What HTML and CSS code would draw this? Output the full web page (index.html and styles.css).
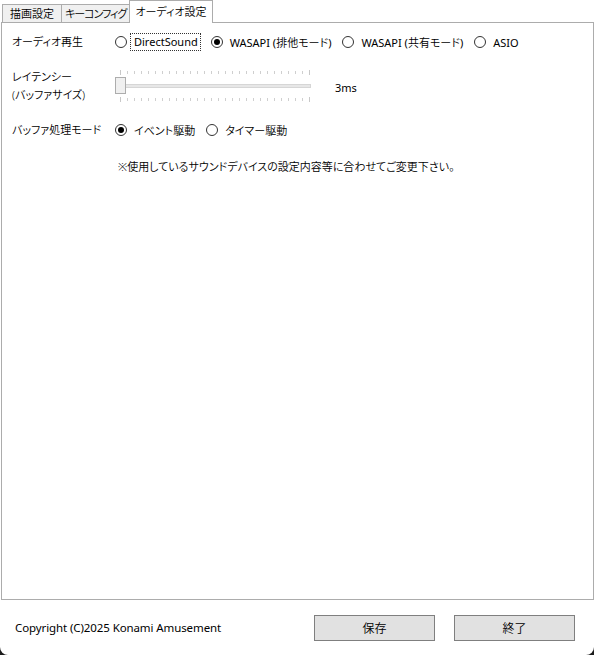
FILE: index.html
```html
<!DOCTYPE html>
<html lang="ja">
<head>
<meta charset="utf-8">
<title>オーディオ設定</title>
<link rel="stylesheet" href="styles.css">
</head>
<body>
<div class="window">
  <div class="tabs">
    <div class="tab first">描画設定</div>
    <div class="tab narrow">キーコンフィグ</div>
    <div class="tab active">オーディオ設定</div>
  </div>
  <div class="panel">
    <div class="row row-playback">
      <div class="label">オーディオ再生</div>
      <div class="options">
        <label class="radio"><span class="circle"></span><span class="text focus lt">DirectSound</span></label>
        <label class="radio"><span class="circle on"></span><span class="text"><span class="lt">WASAPI (</span>排他モード<span class="lt">)</span></span></label>
        <label class="radio"><span class="circle"></span><span class="text"><span class="lt">WASAPI (</span>共有モード<span class="lt">)</span></span></label>
        <label class="radio"><span class="circle"></span><span class="text lt">ASIO</span></label>
      </div>
    </div>
    <div class="row row-latency">
      <div class="label two">レイテンシー<br>(バッファサイズ)</div>
      <div class="slider">
        <svg class="ticks" width="196" height="32" viewBox="0 0 196 32">
          <g stroke="#c8c8c8" stroke-width="1">
            <line x1="5.5" y1="0" x2="5.5" y2="5"/>
            <line x1="194.5" y1="0" x2="194.5" y2="5"/>
            <line x1="5.5" y1="27" x2="5.5" y2="32"/>
            <line x1="194.5" y1="27" x2="194.5" y2="32"/>
          </g>
          <g id="t" stroke="#cfcfcf" stroke-width="1"></g>
        </svg>
        <div class="track"></div>
        <div class="thumb"></div>
      </div>
      <div class="value lt">3ms</div>
    </div>
    <div class="row row-mode">
      <div class="label">バッファ処理モード</div>
      <div class="options">
        <label class="radio"><span class="circle on"></span><span class="text">イベント駆動</span></label>
        <label class="radio"><span class="circle"></span><span class="text">タイマー駆動</span></label>
      </div>
    </div>
    <div class="note">※使用しているサウンドデバイスの設定内容等に合わせてご変更下さい。</div>
  </div>
  <div class="footer">
    <div class="copyright">Copyright (C)2025 Konami Amusement</div>
    <div class="buttons">
      <button class="btn">保存</button>
      <button class="btn">終了</button>
    </div>
  </div>
</div>
<script>
  var g = document.getElementById('t');
  var ns = 'http://www.w3.org/2000/svg';
  for (var i = 1; i < 27; i++) {
    var x = 5.5 + i * 7;
    [[1, 4], [28, 31]].forEach(function (p) {
      var l = document.createElementNS(ns, 'line');
      l.setAttribute('x1', x); l.setAttribute('x2', x);
      l.setAttribute('y1', p[0]); l.setAttribute('y2', p[1]);
      g.appendChild(l);
    });
  }
</script>
</body>
</html>
```
FILE: styles.css
```css
html, body {
  margin: 0;
  padding: 0;
  background: #1c1c1c;
}
body {
  width: 594px;
  height: 655px;
  overflow: hidden;
  font-family: "Noto Sans", "Noto Sans CJK JP", sans-serif;
  font-feature-settings: "palt";
  font-size: 11px;
  font-weight: 350;
  color: #000;
}
.lt {
  font-weight: 400;
}
.window {
  width: 594px;
  height: 655px;
  background: #fff;
  border-radius: 0 0 8px 8px;
  display: flex;
  flex-direction: column;
}
.tabs {
  display: flex;
  align-items: flex-end;
  height: 23px;
  padding-left: 2px;
  position: relative;
  z-index: 1;
  margin-bottom: -1px;
}
.tab {
  height: 18px;
  line-height: 17px;
  box-sizing: border-box;
  border: 1px solid #acacac;
  border-bottom: none;
  background: #f0f0f0;
  padding: 0 5px;
  margin-right: -1px;
  margin-bottom: 1px;
}
.tab.first {
  padding: 0 7px;
}
.tab.narrow {
  padding: 0 3px;
  letter-spacing: -1px;
}
.tab.active {
  height: 23px;
  line-height: 22px;
  background: #fff;
  margin-bottom: 0;
  padding: 0 5px;
}
.panel {
  box-sizing: border-box;
  width: 593px;
  height: 578px;
  margin-left: 1px;
  border: 1px solid #acacac;
  padding: 8px 0 0 10px;
}
.row {
  display: flex;
  align-items: center;
}
.label {
  width: 103px;
  flex: none;
  line-height: 18px;
}
.options {
  display: flex;
  align-items: center;
}
.radio {
  display: flex;
  align-items: center;
  margin-right: 11px;
  height: 18px;
}
.circle {
  box-sizing: border-box;
  width: 12px;
  height: 12px;
  border: 1px solid #333;
  border-radius: 50%;
  background: #fff;
  margin-right: 7px;
  display: flex;
  align-items: center;
  justify-content: center;
}
.circle.on::after {
  content: "";
  width: 6px;
  height: 6px;
  border-radius: 50%;
  background: #000;
}
.text.focus {
  outline: 1px dotted #333;
  outline-offset: 0;
  margin-left: -3px;
  padding: 0 2px 0 3px;
  line-height: 16px;
}
.row-playback {
  height: 22px;
}
.row-latency {
  margin-top: 17px;
  height: 32px;
}
.slider {
  position: relative;
  width: 196px;
  height: 32px;
  flex: none;
}
.ticks {
  display: block;
}
.track {
  position: absolute;
  left: 0;
  top: 14px;
  width: 196px;
  height: 4px;
  box-sizing: border-box;
  background: #e7e7e7;
  border: 1px solid #d6d6d6;
}
.thumb {
  position: absolute;
  left: 0;
  top: 7px;
  width: 11px;
  height: 17px;
  box-sizing: border-box;
  background: #f0f0f0;
  border: 1px solid #adadad;
}
.value {
  margin-left: 24px;
  padding-top: 2px;
}
.row-mode {
  margin-top: 19px;
}
.note {
  margin-top: 19px;
  margin-left: 106px;
  line-height: 18px;
}
.footer {
  flex: 1;
  display: flex;
  align-items: center;
  justify-content: space-between;
  padding: 0 19px 0 15px;
}
.copyright {
  font-family: "Noto Sans", sans-serif;
  font-size: 11.5px;
  font-weight: 400;
  letter-spacing: -0.1px;
}
.buttons {
  display: flex;
  gap: 19px;
}
.btn {
  width: 121px;
  height: 26px;
  box-sizing: border-box;
  background: #e1e1e1;
  border: 1px solid #7f7f7f;
  font-family: "Noto Sans CJK JP", sans-serif;
  font-size: 12px;
  font-weight: 350;
  color: #000;
  padding: 0;
}
```
